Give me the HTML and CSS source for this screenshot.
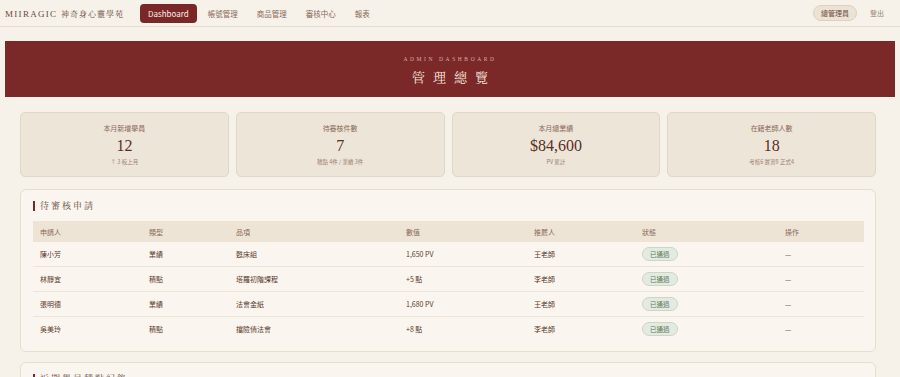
FILE: index.html
```html
<!DOCTYPE html>
<html lang="zh-Hant">
<head>
    <meta charset="UTF-8">
    <meta name="viewport" content="width=device-width, initial-scale=1.0">
    <title>MIIRAGIC 管理總覽</title>
    <link rel="stylesheet" href="styles.css">
</head>
<body>
    <header class="topbar">
        <div class="brand">MIIRAGIC <span class="brand-zh">神奇身心靈學苑</span></div>
        <nav class="nav">
            <a class="nav-link active" href="#">Dashboard</a>
            <a class="nav-link" href="#">帳號管理</a>
            <a class="nav-link" href="#">商品管理</a>
            <a class="nav-link" href="#">審核中心</a>
            <a class="nav-link" href="#">報表</a>
        </nav>
        <div class="user">
            <span class="role">總管理員</span>
            <a class="logout" href="#">登出</a>
        </div>
    </header>

    <section class="hero">
        <div class="hero-sub">ADMIN DASHBOARD</div>
        <h1 class="hero-title">管理總覽</h1>
    </section>

    <main class="main">
        <div class="stats">
            <div class="stat">
                <div class="stat-label">本月新增學員</div>
                <div class="stat-value">12</div>
                <div class="stat-note">↑ 3 較上月</div>
            </div>
            <div class="stat">
                <div class="stat-label">待審核件數</div>
                <div class="stat-value">7</div>
                <div class="stat-note">積點 4件 / 業績 3件</div>
            </div>
            <div class="stat">
                <div class="stat-label">本月總業績</div>
                <div class="stat-value">$84,600</div>
                <div class="stat-note">PV 累計</div>
            </div>
            <div class="stat">
                <div class="stat-label">在籍老師人數</div>
                <div class="stat-value">18</div>
                <div class="stat-note">考核6 實習8 正式4</div>
            </div>
        </div>

        <!-- 待審核申請 -->
        <div class="panel">
            <div class="panel-title">待審核申請</div>
            <table class="table">
                <thead>
                    <tr>
                        <th class="c-name">申請人</th>
                        <th class="c-type">類型</th>
                        <th class="c-item">品項</th>
                        <th class="c-val">數值</th>
                        <th class="c-ref">推薦人</th>
                        <th class="c-status">狀態</th>
                        <th class="c-op">操作</th>
                    </tr>
                </thead>
                <tbody>
                    <tr>
                        <td>陳小芳</td><td>業績</td><td>甦床組</td><td>1,650 PV</td><td>王老師</td>
                        <td><span class="badge">已通過</span></td><td class="dash">—</td>
                    </tr>
                    <tr>
                        <td>林靜宜</td><td>積點</td><td>塔羅初階課程</td><td>+5 點</td><td>李老師</td>
                        <td><span class="badge">已通過</span></td><td class="dash">—</td>
                    </tr>
                    <tr>
                        <td>張明德</td><td>業績</td><td>法會金紙</td><td>1,680 PV</td><td>王老師</td>
                        <td><span class="badge">已通過</span></td><td class="dash">—</td>
                    </tr>
                    <tr>
                        <td>吳美玲</td><td>積點</td><td>擋險債法會</td><td>+8 點</td><td>李老師</td>
                        <td><span class="badge">已通過</span></td><td class="dash">—</td>
                    </tr>
                </tbody>
            </table>
        </div>

        <div class="panel">
            <div class="panel-title">近期學員積點紀錄</div>
        </div>
    </main>
</body>
</html>
```

FILE: styles.css
```css
body {
    margin: 0;
    background: #f6f1e9;
    color: #5b3b2e;
    font-family: "Noto Sans CJK TC", "Noto Sans", sans-serif;
}

.topbar {
    display: flex;
    align-items: center;
    height: 26px;
    padding: 0 5px;
    border-bottom: 1px solid #e6ddd0;
    background: #f6f1e9;
}

.brand {
    font-family: "Liberation Serif", "Noto Serif CJK TC", serif;
    font-size: 9px;
    letter-spacing: 1.3px;
    color: #6b4b3e;
    white-space: nowrap;
    width: 135px;
}

.brand-zh {
    font-size: 8px;
    letter-spacing: 1px;
}

.nav {
    display: flex;
    align-items: center;
    gap: 19px;
}

.nav-link {
    font-size: 7.5px;
    color: #8a6a5a;
    text-decoration: none;
}

.nav-link.active {
    background: #7a2727;
    color: #fbeee8;
    border-radius: 4px;
    padding: 4px 8px;
    font-size: 8px;
    margin-right: -8px;
}

.user {
    margin-left: auto;
    display: flex;
    align-items: center;
    gap: 13px;
    padding-right: 11px;
}

.role {
    font-size: 7px;
    color: #6b4b3e;
    background: #ece3d5;
    border: 1px solid #ddd2c2;
    border-radius: 8px;
    padding: 2px 7px;
}

.logout {
    font-size: 7px;
    color: #9a8474;
    text-decoration: none;
}

.hero {
    margin: 14px 5px 0;
    height: 56px;
    background: #7b2828;
    display: flex;
    flex-direction: column;
    align-items: center;
    justify-content: center;
    gap: 5px;
}

.hero-sub {
    font-family: "Liberation Serif", serif;
    font-size: 5.5px;
    letter-spacing: 2.6px;
    color: #d9aaa0;
    padding-top: 3px;
}

.hero-title {
    margin: 0;
    font-family: "Noto Serif CJK TC", "Liberation Serif", serif;
    font-weight: normal;
    font-size: 13px;
    letter-spacing: 8px;
    margin-right: -8px;
    color: #f3e4dc;
}

.main {
    padding: 15px 24px 0 20px;
}

.stats {
    display: grid;
    grid-template-columns: repeat(4, 1fr);
    gap: 7px;
    margin-bottom: 12px;
}

.stat {
    background: #ede5d8;
    border: 1px solid #e1d7c7;
    border-radius: 5px;
    height: 63px;
    display: flex;
    flex-direction: column;
    align-items: center;
    justify-content: center;
}

.stat-label {
    font-size: 7px;
    color: #8a6a5a;
    margin-bottom: 1px;
}

.stat-value {
    font-family: "Liberation Serif", serif;
    font-size: 16px;
    color: #5a2e28;
    margin: 3px 0 3px;
}

.stat-note {
    font-size: 5.5px;
    color: #9a8070;
}

.panel {
    background: #faf6ef;
    border: 1px solid #e6ddcf;
    border-radius: 6px;
    padding: 11px 11px 10px 12px;
    margin-bottom: 10px;
}

.panel-title {
    font-family: "Noto Serif CJK TC", "Liberation Serif", serif;
    font-size: 9px;
    letter-spacing: 2px;
    color: #6b4b3e;
    border-left: 2px solid #7a2727;
    padding-left: 5px;
    line-height: 10px;
    margin-bottom: 10px;
}

.table {
    width: 100%;
    border-collapse: collapse;
    table-layout: fixed;
    font-size: 7px;
}

.table th {
    box-sizing: border-box;
    background: #ede4d5;
    font-weight: normal;
    text-align: left;
    color: #8a6a5a;
    height: 21px;
    padding: 0 7px;
}

.table td {
    height: 24px;
    padding: 0 7px;
    color: #5b3b2e;
    border-bottom: 1px solid #ece4d7;
}

.table tr:last-child td {
    border-bottom: none;
}

.c-name { width: 109px; }
.c-type { width: 87px; }
.c-item { width: 170px; }
.c-val { width: 128px; }
.c-ref { width: 108px; }
.c-status { width: 143px; }
.c-op { width: auto; }

.badge {
    display: inline-block;
    font-size: 6.5px;
    color: #5e7a5e;
    background: #e3eadf;
    border: 1px solid #c9d8c5;
    border-radius: 7px;
    padding: 1px 7px;
}

.dash {
    color: #9a8a7a;
}
```
